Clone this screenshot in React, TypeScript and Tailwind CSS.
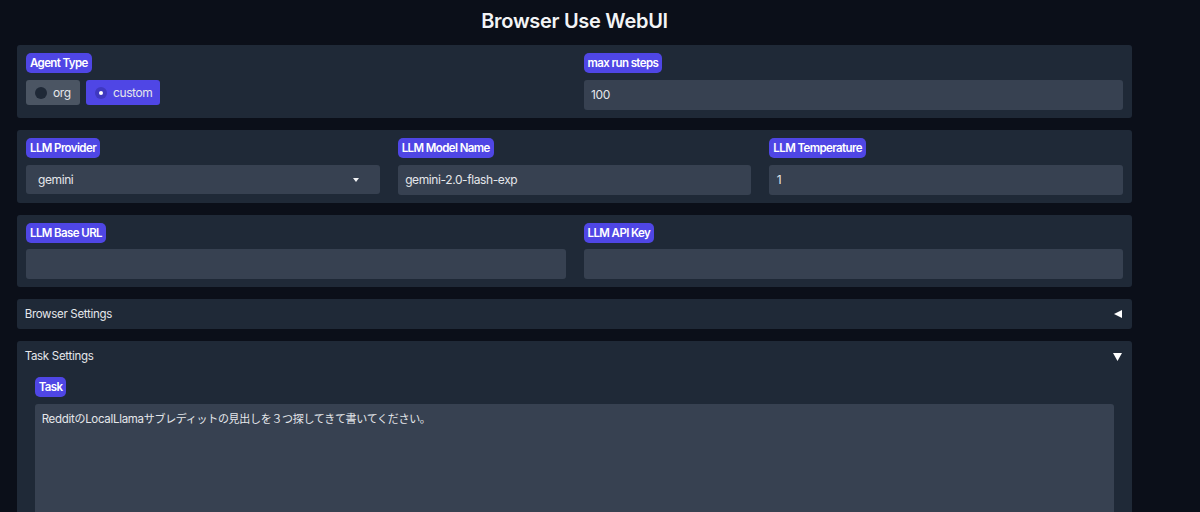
const font = "font-['Inter','Noto_Sans_CJK_JP',sans-serif]";

function Label({ text }: { text: string }) {
  return (
    <div className="flex">
      <span className="h-[20px] rounded-[5px] bg-[#4f46e5] px-[4px] text-[11.5px] leading-[20px] font-semibold tracking-[-0.6px] text-white">
        {text}
      </span>
    </div>
  );
}

function Input({ value }: { value?: string }) {
  return (
    <div className="h-[30px] rounded-[3px] bg-[#374151] px-[7.5px] text-[12px] leading-[29px] tracking-[-0.4px] text-[#e5e7eb]">
      {value}
    </div>
  );
}

function Field({ label, value, gap = "gap-[7px]" }: { label: string; value?: string; gap?: string }) {
  return (
    <div className={`flex min-w-0 flex-1 flex-col ${gap}`}>
      <Label text={label} />
      <Input value={value} />
    </div>
  );
}

function Panel({ children, h }: { children: React.ReactNode; h: string }) {
  return (
    <div className={`flex ${h} gap-[18px] rounded-[3px] bg-[#1f2937] px-[9.33px] pt-[8px]`}>{children}</div>
  );
}

export default function App() {
  return (
    <div className={`h-[512px] overflow-hidden bg-[#0b0f19] pr-[67.67px] pl-[16.67px] ${font}`}>
      <h1 className="h-[45px] text-center text-[20px] leading-[42px] font-semibold tracking-[-0.3px] text-[#f3f4f6]">
        Browser Use WebUI
      </h1>
      <div className="flex flex-col gap-[12px]">
        <Panel h="h-[73px]">
          <div className="flex flex-1 flex-col gap-[7px]">
            <Label text="Agent Type" />
            <div className="flex gap-[6px] text-[12px] tracking-[-0.4px] text-[#e5e7eb]">
              <div className="flex h-[25px] w-[54px] items-center gap-[6px] rounded-[3px] bg-[#4b5563] pl-[9px]">
                <span className="h-[12px] w-[12px] rounded-full bg-[#1f2937]" />
                org
              </div>
              <div className="flex h-[25px] w-[74px] items-center gap-[6px] rounded-[3px] bg-[#4f46e5] pl-[9px]">
                <span className="flex h-[12px] w-[12px] items-center justify-center rounded-full bg-[#3f38c0]">
                  <span className="h-[4px] w-[4px] rounded-full bg-white" />
                </span>
                custom
              </div>
            </div>
          </div>
          <Field label="max run steps" value="100" />
        </Panel>

        <Panel h="h-[73px]">
          <div className="flex min-w-0 flex-1 flex-col gap-[7px]">
            <Label text="LLM Provider" />
            <div className="flex h-[29px] items-center justify-between rounded-[3px] bg-[#374151] pr-[21px] pl-[12px] text-[12px] tracking-[-0.4px] text-[#e5e7eb]">
              gemini
              <svg width="6" height="4" viewBox="0 0 6 4" className="mt-[1px]">
                <path d="M0 0h6L3 4z" fill="#f3f4f6" />
              </svg>
            </div>
          </div>
          <Field label="LLM Model Name" value="gemini-2.0-flash-exp" />
          <Field label="LLM Temperature" value="1" />
        </Panel>

        <Panel h="h-[72px]">
          <Field label="LLM Base URL" gap="gap-[6px]" />
          <Field label="LLM API Key" gap="gap-[6px]" />
        </Panel>

        <div className="flex h-[30px] items-center justify-between rounded-[3px] bg-[#1f2937] pr-[10px] pl-[8px] text-[11.5px] tracking-[-0.3px] text-[#e5e7eb]">
          <span className="pt-[1px]">Browser Settings</span>
          <svg width="8" height="8" viewBox="0 0 8 8">
            <path d="M0 4l8-4v8z" fill="#fff" />
          </svg>
        </div>

        <div className="rounded-[3px] bg-[#1f2937] pr-[18px] pb-[20px]">
          <div className="flex h-[31px] items-center justify-between pl-[8px] text-[11.5px] tracking-[-0.3px] text-[#e5e7eb]">
            <span className="pt-[1px]">Task Settings</span>
            <svg width="9" height="8" viewBox="0 0 9 8" className="mr-[-8px]">
              <path d="M0 0h9L4.5 8z" fill="#fff" />
            </svg>
          </div>
          <div className="flex flex-col gap-[7px] pt-[5px] pl-[18px]">
            <Label text="Task" />
            <div className="h-[200px] rounded-[3px] bg-[#374151] px-[7px] py-[7px] text-[11px] leading-[16px] tracking-[-0.3px] text-[#e5e7eb]">
              <span className="text-[11.5px] tracking-[-0.3px]">Reddit</span>の
              <span className="text-[11.5px] tracking-[-0.3px]">LocalLlama</span>
              サブレディットの見出しを３つ探してきて書いてください。
            </div>
          </div>
        </div>
      </div>
    </div>
  );
}
